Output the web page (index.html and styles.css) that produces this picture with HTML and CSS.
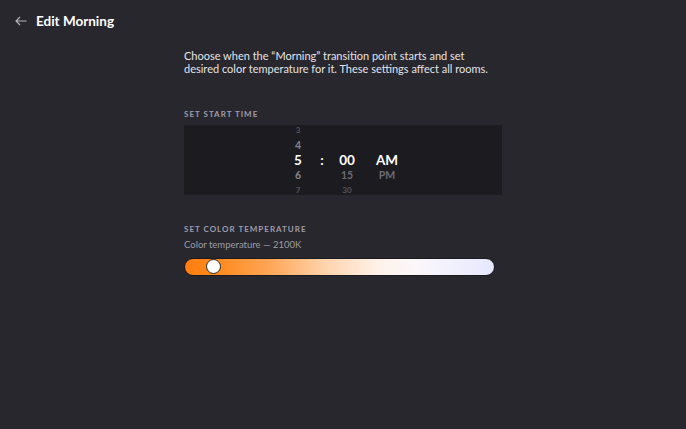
FILE: index.html
```html
<html>
<head>
    <title>Edit Morning</title>
    <link rel="stylesheet" href="styles.css">
</head>
<body>
    <div id="header">
        <svg class="back" width="12" height="10" viewBox="0 0 12 10">
            <path d="M11.5 5H1M5 1L1 5l4 4" fill="none" stroke="#b9b8bf" stroke-width="1.1"/>
        </svg>
        <div class="title">Edit Morning</div>
    </div>
    <div id="main">
        <p class="intro">Choose when the “Morning” transition point starts and set desired color temperature for it. These settings affect all rooms.</p>

        <div class="label">Set start time</div>
        <div class="picker">
            <div class="col hour">
                <div class="far">3</div>
                <div class="near">4</div>
                <div class="sel">5</div>
                <div class="near">6</div>
                <div class="far">7</div>
            </div>
            <div class="col colon">
                <div></div><div></div>
                <div class="sel">:</div>
                <div></div><div></div>
            </div>
            <div class="col minute">
                <div></div><div></div>
                <div class="sel">00</div>
                <div class="near dim">15</div>
                <div class="far">30</div>
            </div>
            <div class="col ampm">
                <div></div><div></div>
                <div class="sel">AM</div>
                <div class="near dim">PM</div>
                <div></div>
            </div>
        </div>

        <div class="label color-label">Set color temperature</div>
        <div class="sub">Color temperature — 2100K</div>
        <div class="slider">
            <div class="thumb" style="left: 21px"></div>
        </div>
    </div>
</body>
</html>
```

FILE: styles.css
```css
body {
    background-color: #28272d;
    margin: 0;
    font-family: Lato, "Open Sans", sans-serif;
    color: #fff;
}
#header {
    display: flex;
    align-items: center;
    height: 42px;
    padding-left: 15px;
    gap: 9px;
}
.back {
    display: block;
}
.title {
    font-size: 13.5px;
    font-weight: 700;
}
#main {
    width: 318px;
    margin-left: 184px;
}
.intro {
    margin: 7px 0 0 0;
    font-size: 11px;
    line-height: 13px;
    color: #e4e3e8;
}
.label {
    margin-top: 34px;
    font-size: 8px;
    font-weight: 700;
    letter-spacing: 1px;
    text-transform: uppercase;
    color: #9e9dab;
    line-height: 10px;
}
.picker {
    margin-top: 6px;
    height: 70px;
    background-color: #1c1b20;
    display: flex;
    padding-left: 104px;
    overflow: hidden;
}
.col {
    display: flex;
    flex-direction: column;
    justify-content: center;
    align-items: center;
    height: 70px;
    font-weight: 700;
}
.col div {
    height: 15px;
    line-height: 15px;
    flex-shrink: 0;
}
.hour { width: 20px; }
.colon { width: 10px; margin-left: 9px; }
.minute { width: 26px; margin-left: 7px; }
.ampm { width: 30px; margin-left: 12px; }
.sel {
    font-size: 13.5px;
    color: #fff;
}
.near {
    font-size: 10.5px;
    color: #86858d;
}
.near.dim {
    color: #6c6b73;
}
.far {
    font-size: 8px;
    color: #55545b;
}
.color-label {
    margin-top: 29px;
}
.sub {
    margin-top: 5px;
    font-size: 9.5px;
    color: #9d9ca4;
    line-height: 12px;
}
.slider {
    position: relative;
    margin-top: 7px;
    width: 311px;
    height: 18px;
    border-radius: 9px;
    box-sizing: border-box;
    border: 1px solid #1b1a1f;
    background: linear-gradient(to right, #ff7e0e 0%, #ff8c22 12%, #ffa75a 28%, #ffd3ab 45%, #fff1e8 62%, #fbf7fb 75%, #e5e8fe 100%);
}
.thumb {
    position: absolute;
    top: 0;
    width: 15px;
    height: 15px;
    box-sizing: border-box;
    border-radius: 50%;
    background-color: #fff;
    border: 1.5px solid #2a2420;
}
```
